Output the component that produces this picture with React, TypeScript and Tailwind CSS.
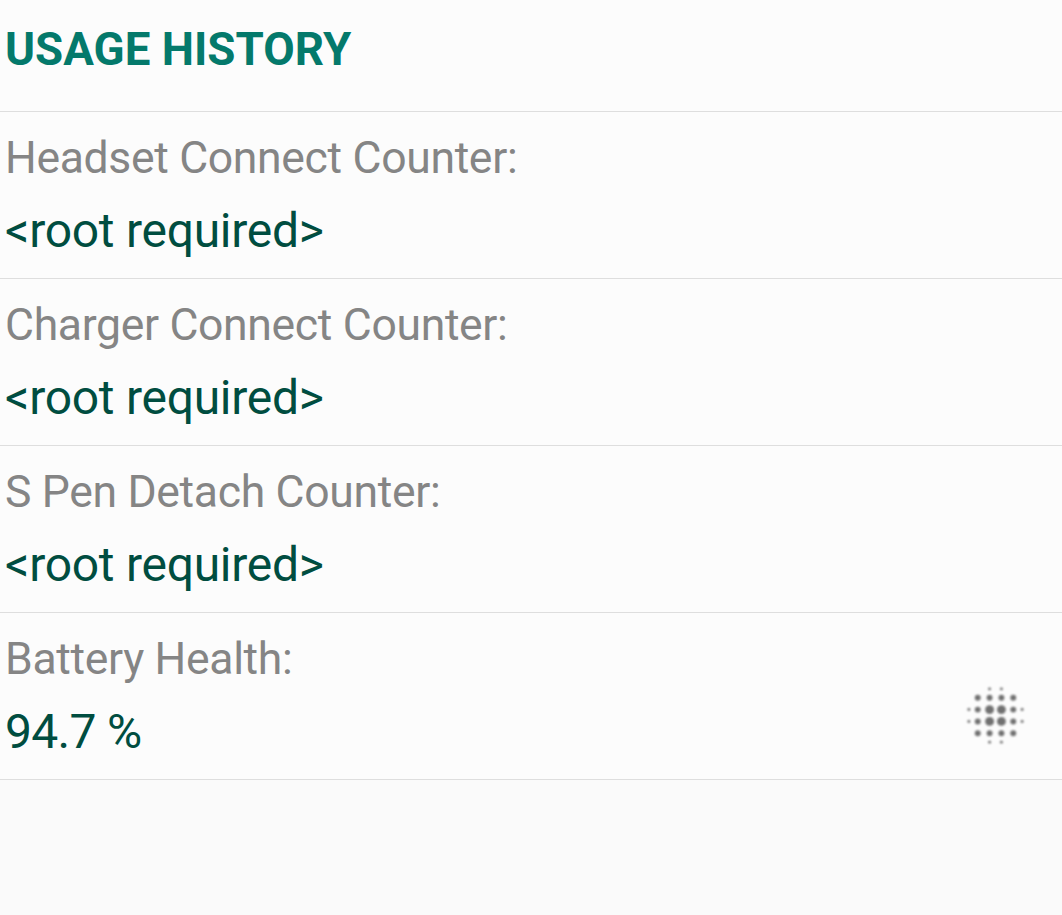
const ITEMS = [
  { label: 'Headset Connect Counter:', value: '<root required>' },
  { label: 'Charger Connect Counter:', value: '<root required>' },
  { label: 'S Pen Detach Counter:', value: '<root required>' },
  { label: 'Battery Health:', value: '94.7 %', icon: true },
];

// [cx, cy, r] in the 24x24 icon grid
const DOTS = [
  [10, 3, 0.5], [14, 3, 0.5],
  [6, 6, 1], [10, 6, 1], [14, 6, 1], [18, 6, 1],
  [3, 10, 0.5], [6, 10, 1], [10, 10, 1.5], [14, 10, 1.5], [18, 10, 1], [21, 10, 0.5],
  [3, 14, 0.5], [6, 14, 1], [10, 14, 1.5], [14, 14, 1.5], [18, 14, 1], [21, 14, 0.5],
  [6, 18, 1], [10, 18, 1], [14, 18, 1], [18, 18, 1],
  [10, 21, 0.5], [14, 21, 0.5],
];

function DotsIcon() {
  return (
    <svg viewBox="0 0 24 24" className="w-[71px] h-[71px] mt-[67px] shrink-0 fill-[#707070] blur-[0.9px]" aria-hidden="true">
      {DOTS.map(([cx, cy, r]) => (
        <circle key={`${cx}-${cy}`} cx={cx} cy={cy} r={r} />
      ))}
    </svg>
  );
}

export default function App() {
  return (
    <main className="min-h-screen bg-[#fafafa] font-['Roboto',sans-serif]">
      <h1 className="h-28 pt-5 pl-[5px] bg-[#fcfcfc] border-b border-[#dedede] text-[45.7px] leading-[60px] font-bold text-[#04796b]">
        USAGE HISTORY
      </h1>
      {ITEMS.map((item) => (
        <section key={item.label} className="flex items-start justify-between h-[167px] pl-[5px] pr-[31px] bg-[#fcfcfc] border-b border-[#dedede]">
          <div className="pt-2.5 whitespace-nowrap">
            <h2 className="text-[44.5px] leading-[73px] tracking-[-0.33px] text-[#858585]">{item.label}</h2>
            <p className={`text-[48px] leading-[71px] text-[#004d40] ${item.icon ? 'tracking-[-0.7px]' : 'tracking-[-0.27px]'}`}>
              {item.value}
            </p>
          </div>
          {item.icon && <DotsIcon />}
        </section>
      ))}
    </main>
  );
}
